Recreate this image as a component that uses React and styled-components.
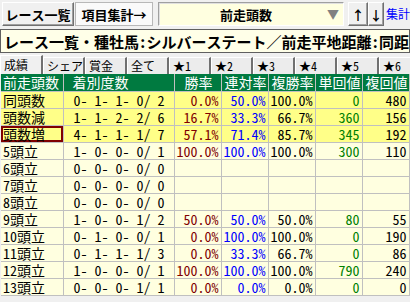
import styled, { createGlobalStyle } from 'styled-components'

const GlobalStyle = createGlobalStyle`
  html, body {
    margin: 0;
    padding: 0;
    background: #f0f0f0;
  }
  body {
    font-family: "Noto Sans Mono CJK JP", "Noto Sans CJK JP", monospace;
    font-size: 14px;
    color: #000;
  }
`

const rows = [
  { label: '同頭数', hit: '0- 1- 1- 0/ 2', win: '0.0%', ren: '50.0%', fuku: '100.0%', tan: '0', fkv: '480', hot: true },
  { label: '頭数減', hit: '1- 1- 2- 2/ 6', win: '16.7%', ren: '33.3%', fuku: '66.7%', tan: '360', fkv: '156', hot: true },
  { label: '頭数増', hit: '4- 1- 1- 1/ 7', win: '57.1%', ren: '71.4%', fuku: '85.7%', tan: '345', fkv: '192', hot: true, selected: true },
  { label: '5頭立', hit: '1- 0- 0- 0/ 1', win: '100.0%', ren: '100.0%', fuku: '100.0%', tan: '300', fkv: '110' },
  { label: '6頭立', hit: '0- 0- 0- 0/ 0' },
  { label: '7頭立', hit: '0- 0- 0- 0/ 0' },
  { label: '8頭立', hit: '0- 0- 0- 0/ 0' },
  { label: '9頭立', hit: '1- 0- 0- 1/ 2', win: '50.0%', ren: '50.0%', fuku: '50.0%', tan: '80', fkv: '55' },
  { label: '10頭立', hit: '0- 1- 0- 0/ 1', win: '0.0%', ren: '100.0%', fuku: '100.0%', tan: '0', fkv: '190' },
  { label: '11頭立', hit: '0- 1- 1- 1/ 3', win: '0.0%', ren: '33.3%', fuku: '66.7%', tan: '0', fkv: '86' },
  { label: '12頭立', hit: '1- 0- 0- 0/ 1', win: '100.0%', ren: '100.0%', fuku: '100.0%', tan: '790', fkv: '240' },
  { label: '13頭立', hit: '0- 0- 0- 1/ 1', win: '0.0%', ren: '0.0%', fuku: '0.0%', tan: '0', fkv: '0' },
]

const tabs = ['成績', 'シェア', '賞金', '全て', '★1', '★2', '★3', '★4', '★5', '★6']

export default function App() {
  return (
    <>
      <GlobalStyle />
      <Screen>
        <Toolbar>
          <Button $w={72} $ml={2}>レース一覧</Button>
          <Button $w={78} $ml={1} $checked>項目集計→</Button>
          <Combo>
            <ComboText>前走頭数</ComboText>
            <ComboArrow>▼</ComboArrow>
          </Combo>
          <Button $w={20} $ml={4}>↑</Button>
          <Button $w={16}>↓</Button>
          <LinkText>集計</LinkText>
        </Toolbar>

        <TitleBar>レース一覧・種牡馬:シルバーステート／前走平地距離:同距離</TitleBar>

        <TabRow>
          {tabs.map((t, i) => (
            <Tab key={t} $active={i === 0}>{t}</Tab>
          ))}
        </TabRow>

        <Grid>
          <colgroup>
            <col style={{ width: 62 }} />
            <col style={{ width: 111 }} />
            <col style={{ width: 47 }} />
            <col style={{ width: 47 }} />
            <col style={{ width: 47 }} />
            <col style={{ width: 47 }} />
            <col style={{ width: 47 }} />
            <col style={{ width: 47 }} />
          </colgroup>
          <thead>
            <tr>
              <Head>前走頭数</Head>
              <Head $pad={9}>着別度数</Head>
              <Head $center>勝率</Head>
              <Head $center>連対率</Head>
              <Head $center>複勝率</Head>
              <Head $center>単回値</Head>
              <Head $center>複回値</Head>
              <Head />
            </tr>
          </thead>
          <tbody>
            {rows.map(r => (
              <Row key={r.label} $hot={r.hot}>
                <LabelCell $selected={r.selected}>{r.label}</LabelCell>
                <HitCell>{r.hit}</HitCell>
                <Num $color="#800000">{r.win}</Num>
                <Num $color="#0000ff">{r.ren}</Num>
                <Num>{r.fuku}</Num>
                <Num $color="#008000">{r.tan}</Num>
                <Num>{r.fkv}</Num>
                <Num />
              </Row>
            ))}
          </tbody>
        </Grid>
      </Screen>
    </>
  )
}

const Screen = styled.div`
  width: 410px;
  height: 302px;
  overflow: hidden;
  background: #f0f0f0;
`

const Toolbar = styled.div`
  display: flex;
  align-items: center;
  height: 28px;
`

const Button = styled.div`
  box-sizing: border-box;
  flex: 0 0 ${p => p.$w}px;
  margin-left: ${p => p.$ml || 0}px;
  height: 24px;
  display: flex;
  align-items: center;
  justify-content: center;
  font-weight: 700;
  font-size: 13px;
  line-height: 1;
  white-space: nowrap;
  overflow: hidden;
  background: ${p => (p.$checked ? '#fafafa' : '#f0f0f0')};
  border: 1px solid;
  border-color: ${p => (p.$checked ? '#b8b8b8' : '#ffffff #707070 #707070 #ffffff')};
  box-shadow: ${p => (p.$checked ? 'none' : 'inset -1px -1px 0 #a0a0a0')};
`

const Combo = styled.div`
  box-sizing: border-box;
  flex: 0 0 186px;
  height: 24px;
  margin-left: 5px;
  display: flex;
  align-items: center;
  background: #ffffe0;
  border: 1px solid;
  border-color: #a0a0a0 #ffffff #ffffff #a0a0a0;
  box-shadow: inset 1px 1px 0 #e0e0e0;
`

const ComboText = styled.div`
  flex: 1;
  text-align: center;
  font-weight: 700;
  font-size: 13px;
  line-height: 1;
  padding-left: 10px;
`

const ComboArrow = styled.div`
  width: 20px;
  color: #808080;
  font-size: 12px;
  line-height: 1;
  text-align: center;
`

const LinkText = styled.div`
  color: #0000ff;
  font-size: 12px;
  line-height: 1;
  margin-left: 2px;
  white-space: nowrap;
`

const TitleBar = styled.div`
  box-sizing: border-box;
  height: 24px;
  margin: 1px 0 2px 0;
  padding-left: 3px;
  display: flex;
  align-items: center;
  background: #ffffe8;
  border: 1px solid #606060;
  font-weight: 700;
  font-size: 15px;
  line-height: 1;
  white-space: nowrap;
  overflow: hidden;
`

const TabRow = styled.div`
  display: flex;
  height: 19px;
  align-items: flex-end;
`

const Tab = styled.div`
  box-sizing: border-box;
  flex: 0 0 ${p => (p.$active ? 43 : 42)}px;
  height: ${p => (p.$active ? 19 : 17)}px;
  display: flex;
  align-items: center;
  padding-left: 3px;
  font-size: 12px;
  line-height: 1;
  white-space: nowrap;
  overflow: hidden;
  background: ${p => (p.$active ? '#f0f0f0' : '#ececec')};
  border-left: 1px solid #ffffff;
  border-right: 2px solid #707070;
  border-top: 1px solid #ffffff;
`

const Grid = styled.table`
  border-collapse: collapse;
  table-layout: fixed;
  width: 455px;
  margin-left: 1px;
`

const Head = styled.th`
  height: 17px;
  padding: 0 0 0 ${p => (p.$pad ?? 2)}px;
  background: #007a40;
  color: #ffffff;
  font-weight: 400;
  font-size: 14px;
  line-height: 17px;
  text-align: ${p => (p.$center ? 'center' : 'left')};
  white-space: nowrap;
  overflow: hidden;
  border-right: 1px solid #c0c0c0;
  border-bottom: 1px solid #c0c0c0;
`

const Row = styled.tr`
  background: ${p => (p.$hot ? '#ffff88' : '#ffffe0')};
`

const Cell = styled.td`
  height: 16px;
  padding: 0 2px;
  font-size: 14px;
  line-height: 16px;
  white-space: pre;
  overflow: hidden;
  border-right: 1px solid #c0c0c0;
  border-bottom: 1px solid #c0c0c0;
`

const LabelCell = styled(Cell)`
  box-shadow: ${p => (p.$selected ? 'inset 0 0 0 2px #800000' : 'none')};
`

const HitCell = styled(Cell)`
  padding-left: 10px;
`

const Num = styled(Cell)`
  text-align: right;
  color: ${p => p.$color || '#000000'};
`
